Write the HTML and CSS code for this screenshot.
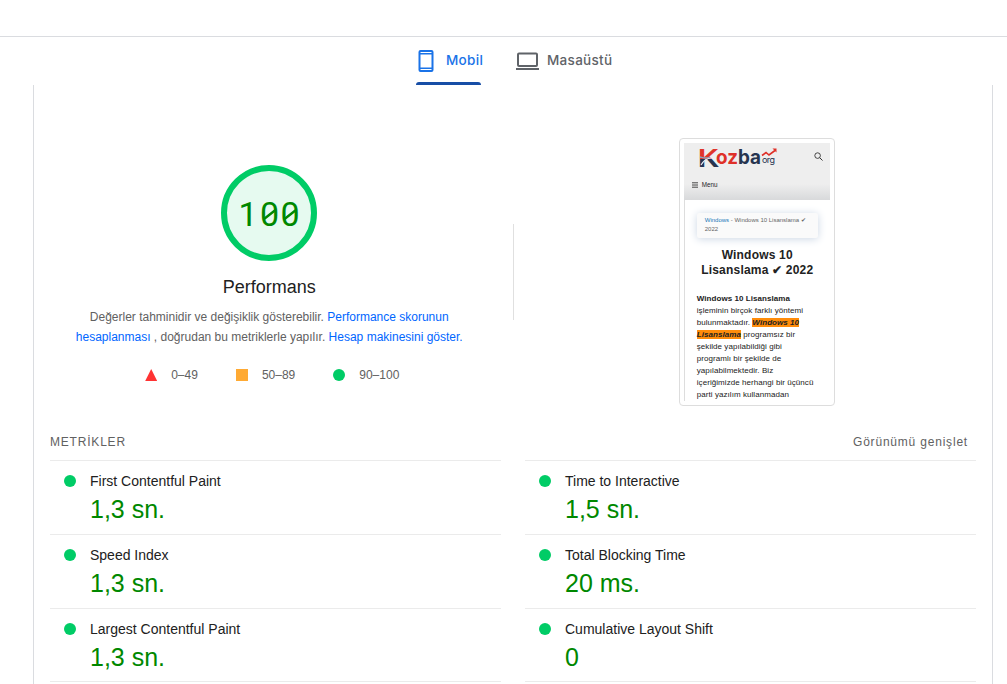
FILE: index.html
```html
<!DOCTYPE html>
<html lang="tr">
  <head>
    <meta charset="UTF-8">
    <meta name="viewport" content="width=device-width, initial-scale=1.0">
    <title>PageSpeed Insights</title>
    <link rel="stylesheet" href="styles.css">
  </head>
  <body>
    <header class="topbar"></header>

    <nav class="tabs">
      <a class="tab tab-active">
        <svg width="16" height="22" viewBox="0 0 16 22" fill="none" stroke="currentColor">
          <rect x="1.5" y="1" width="13" height="20" rx="1" stroke-width="2" />
          <path d="M1 3.7h14M1 18.3h14" stroke-width="1.4" />
        </svg>
        <span>Mobil</span>
      </a>
      <a class="tab tab-desktop">
        <svg width="23" height="18" viewBox="0 0 23 18" fill="none" stroke="currentColor" stroke-width="2">
          <rect x="2" y="1.5" width="19" height="12.5" rx="1" />
          <path d="M0 17h23" />
        </svg>
        <span>Masaüstü</span>
      </a>
    </nav>

    <main class="panel">
      <section class="overview">
        <div class="score">
          <svg class="gauge" width="96" height="96" viewBox="0 0 96 96">
            <circle cx="48" cy="48" r="45" />
            <text x="17.5 39 59.5" y="61">100</text>
            <path d="M43 54L54.5 45M63.5 54L75 45" />
          </svg>
          <h1>Performans</h1>
          <p class="score-text">
            Değerler tahminidir ve değişiklik gösterebilir. <a>Performance skorunun<br>hesaplanması</a>
            , doğrudan bu metriklerle yapılır. <a>Hesap makinesini göster.</a>
          </p>
          <div class="scale">
            <span class="scale-item"><i class="fail"></i>0–49</span>
            <span class="scale-item"><i class="average"></i>50–89</span>
            <span class="scale-item"><i class="pass"></i>90–100</span>
          </div>
        </div>
        <div class="divider"></div>

        <!-- Page thumbnail -->
        <div class="preview">
          <div class="screen">
            <div class="site-header">
              <div class="site-top">
                <svg class="site-logo" width="84" height="28" viewBox="0 0 84 28">
                  <defs>
                    <linearGradient id="kfill" x1="0" y1="0" x2="0" y2="1">
                      <stop offset="55%" stop-color="#e0352b" />
                      <stop offset="55%" stop-color="#26344f" />
                    </linearGradient>
                  </defs>
                  <text x="0" y="21.5" class="logo-k" fill="url(#kfill)" textLength="21" lengthAdjust="spacingAndGlyphs">K</text>
                  <path d="M3 20c3-5 6-7 10-7" fill="none" stroke="#e8edf3" stroke-width="1.2" />
                  <path d="M2 12c4 1 6 2 10 0" fill="none" stroke="#8fa5bf" stroke-width="1.3" />
                  <text x="18" y="19" class="logo-word" textLength="45" lengthAdjust="spacingAndGlyphs"><tspan fill="#df3028">oz</tspan><tspan fill="#26344f">ba</tspan></text>
                  <text x="64" y="17.5" class="logo-org" textLength="13">org</text>
                  <path d="M64 10.5l4-3 3 2.5 6-4.5" fill="none" stroke="#df3028" stroke-width="1.6" />
                  <path d="M74.5 3.5h4v4z" fill="#df3028" />
                </svg>
                <svg class="search" width="9" height="9" viewBox="0 0 9 9" fill="none" stroke="#333">
                  <circle cx="3.6" cy="3.6" r="2.8" stroke-width="0.9" />
                  <path d="M5.7 5.7L8.5 8.5" />
                </svg>
              </div>
              <div class="site-menu">
                <svg width="6" height="6" viewBox="0 0 6 6" stroke="#333" stroke-width="0.9">
                  <path d="M0 0.8h6M0 3h6M0 5.2h6" />
                </svg>
                Menu
              </div>
            </div>
            <div class="site-body">
              <div class="crumbs"><a>Windows</a> - Windows 10 Lisanslama ✔<br>2022</div>
              <h2>Windows 10<br>Lisanslama ✔ 2022</h2>
              <p>
                <b>Windows 10 Lisanslama</b><br>
                işleminin birçok farklı yöntemi<br>
                bulunmaktadır. <mark>Windows 10</mark><br>
                <mark>Lisanslama</mark> programsız bir<br>
                şekilde yapılabildiği gibi<br>
                programlı bir şekilde de<br>
                yapılabilmektedir. Biz<br>
                içeriğimizde herhangi bir üçüncü<br>
                parti yazılım kullanmadan
              </p>
            </div>
          </div>
        </div>
      </section>

      <section class="metrics">
        <div class="metrics-head">
          <span class="metrics-title">METRİKLER</span>
          <span class="metrics-expand">Görünümü genişlet</span>
        </div>
        <div class="metrics-grid">
          <div class="metric">
            <i class="pass"></i>
            <div><h3>First Contentful Paint</h3><div class="value">1,3 sn.</div></div>
          </div>
          <div class="metric">
            <i class="pass"></i>
            <div><h3>Time to Interactive</h3><div class="value">1,5 sn.</div></div>
          </div>
          <div class="metric">
            <i class="pass"></i>
            <div><h3>Speed Index</h3><div class="value">1,3 sn.</div></div>
          </div>
          <div class="metric">
            <i class="pass"></i>
            <div><h3>Total Blocking Time</h3><div class="value">20 ms.</div></div>
          </div>
          <div class="metric metric-last">
            <i class="pass"></i>
            <div><h3>Largest Contentful Paint</h3><div class="value">1,3 sn.</div></div>
          </div>
          <div class="metric metric-last">
            <i class="pass"></i>
            <div><h3>Cumulative Layout Shift</h3><div class="value">0</div></div>
          </div>
        </div>
      </section>
    </main>
  </body>
</html>
```

FILE: styles.css
```css
* {
  box-sizing: border-box;
}

body {
  margin: 0;
  height: 684px;
  overflow: hidden;
  background: #fff;
  color: #212121;
  font-family: "Liberation Sans", Arial, sans-serif;
}

h1,
h2,
h3,
p {
  margin: 0;
  font-weight: normal;
}

.topbar {
  height: 37px;
  border-bottom: 1px solid #dadce0;
}

/* Tabs */
.tabs {
  display: flex;
  gap: 35px;
  height: 48px;
  padding-left: 416px;
}
.tab {
  display: flex;
  align-items: center;
  width: 65px;
  border-bottom: 3px solid transparent;
  color: #5f6368;
  font: 500 13.5px Inter, sans-serif;
  letter-spacing: 0.3px;
  white-space: nowrap;
}
.tab-active {
  padding-left: 2px;
  color: #1a73e8;
  position: relative;
}
.tab-active::after {
  content: "";
  position: absolute;
  left: 0;
  bottom: -3px;
  width: 100%;
  height: 3px;
  border-radius: 3px 3px 0 0;
  background: #174ea6;
}
.tab svg {
  flex: none;
  margin-top: 3px;
}
.tab-active span {
  margin-left: 12px;
}
.tab-desktop span {
  margin-left: 8px;
}

.panel {
  margin: 0 14px 0 33px;
  padding: 0 16px;
  height: 599px;
  border: solid #dadce0;
  border-width: 0 1px;
}

/* Score */
.overview {
  display: grid;
  grid-template-columns: 1fr 1px 1fr;
  column-gap: 24px;
  height: 345px;
}
.score {
  display: flex;
  flex-direction: column;
  align-items: center;
  padding-top: 80px;
}
.gauge circle {
  fill: #e6faf0;
  stroke: #0c6;
  stroke-width: 6;
}
.gauge text {
  fill: #080;
  font: 400 34px Roboto, sans-serif;
}
.gauge path {
  stroke: #080;
  stroke-width: 2.4;
}
.score h1 {
  margin-top: 14px;
  font-size: 18px;
  line-height: 24px;
}
.score-text {
  margin-top: 8px;
  color: #616161;
  font-size: 12px;
  line-height: 20px;
  text-align: center;
  white-space: nowrap;
}
.score-text a {
  color: #06f;
}
.scale {
  display: flex;
  gap: 38px;
  margin: 18px 0 0 6px;
  color: #616161;
  font-size: 12px;
  line-height: 20px;
}
.scale-item {
  display: flex;
  align-items: center;
}
.scale-item i {
  margin-right: 14px;
}
.pass,
.average,
.fail {
  flex: none;
  width: 12px;
  height: 12px;
}
.pass {
  border-radius: 50%;
  background: #0c6;
}
.average {
  background: #fa3;
}
.fail {
  background: #f33;
  clip-path: polygon(50% 0, 100% 100%, 0 100%);
}

.divider {
  height: 96px;
  margin-top: 139px;
  background: #e0e0e0;
}

/* Thumbnail */
.preview {
  justify-self: center;
  width: 156px;
  height: 268px;
  margin-top: 53px;
  padding: 4px;
  border: 1px solid #ddd;
  border-radius: 4px;
}
.screen {
  height: 258px;
  overflow: hidden;
  color: #222;
}
.site-header {
  height: 57px;
  background: linear-gradient(#eee 72%, #d8d9db);
}
.site-top {
  display: flex;
  justify-content: space-between;
  height: 26px;
  padding: 2px 7px 0 14px;
}
.site-logo {
  flex: none;
}
.search {
  margin-top: 7px;
}
.logo-k {
  font: bold 26px/1 "Liberation Sans", sans-serif;
}
.logo-word {
  font: bold 20px/1 Inter, sans-serif;
}
.logo-org {
  font: 9px/1 Inter, sans-serif;
  fill: #26344f;
}
.site-menu {
  display: flex;
  align-items: center;
  gap: 4px;
  margin-top: 11px;
  padding-left: 8px;
  font-size: 6.3px;
  line-height: 10px;
}
.site-body {
  height: 201px;
  padding: 13px 12px 0;
  border-left: 1px solid #ddd;
}
.crumbs {
  width: 121px;
  height: 25px;
  padding: 2.5px 8px;
  border-radius: 2px;
  background: #fafafa;
  box-shadow: 0 1px 8px #cbd6e4;
  color: #666;
  font-size: 6px;
  line-height: 9px;
  white-space: nowrap;
}
.crumbs a {
  color: #1b78b8;
}
.site-body h2 {
  margin-top: 10px;
  font-size: 12px;
  font-weight: bold;
  line-height: 15px;
  letter-spacing: 0.2px;
  text-align: center;
  white-space: nowrap;
}
.site-body p {
  margin-top: 14.5px;
  font-size: 8px;
  line-height: 12.1px;
  letter-spacing: 0.06px;
  white-space: nowrap;
}
mark {
  background: #ff8c0a;
  color: #222;
  font-style: italic;
  font-weight: bold;
}

/* Metrics */
.metrics-head {
  display: flex;
  justify-content: space-between;
  height: 30px;
  padding: 2px 8px 0 0;
  color: #616161;
  font-size: 12px;
  line-height: 20px;
  letter-spacing: 0.8px;
}
.metrics-grid {
  display: grid;
  grid-template-columns: 1fr 1fr;
  column-gap: 24px;
}
.metric {
  display: flex;
  height: 74px;
  padding: 10px 14px 0;
  border-top: 1px solid #ebebeb;
}
.metric-last {
  border-bottom: 1px solid #ebebeb;
}
.metric i {
  margin: 4px 14px 0 0;
}
.metric h3 {
  font-size: 14px;
  line-height: 20px;
}
.value {
  margin-top: 1px;
  color: #080;
  font-size: 25px;
  line-height: 34px;
}
```
